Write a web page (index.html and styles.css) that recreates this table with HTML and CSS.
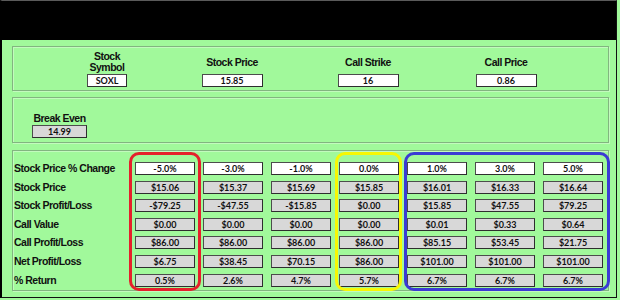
FILE: index.html
```html
<!DOCTYPE html>
<html>
<head>
<meta charset="utf-8">
<link rel="stylesheet" href="styles.css">
</head>
<body>
<div class="frame">
  <div class="header"></div>
  <div class="content">
    <section class="panel inputs">
      <div class="field"><div class="label">Stock<br>Symbol</div><div class="box white w40">SOXL</div></div>
      <div class="field"><div class="label">Stock Price</div><div class="box white w61">15.85</div></div>
      <div class="field"><div class="label">Call Strike</div><div class="box white w61">16</div></div>
      <div class="field"><div class="label">Call Price</div><div class="box white w61">0.86</div></div>
    </section>
    <section class="panel breakeven">
      <div class="field"><div class="label">Break Even</div><div class="box gray w55">14.99</div></div>
    </section>
    <section class="panel table">
      <div class="grid">
        <div class="rowlabel">Stock Price % Change</div>
        <div class="box white">-5.0%</div><div class="box white">-3.0%</div><div class="box white">-1.0%</div><div class="box white">0.0%</div><div class="box white">1.0%</div><div class="box white">3.0%</div><div class="box white">5.0%</div>
        <div class="rowlabel">Stock Price</div>
        <div class="box gray">$15.06</div><div class="box gray">$15.37</div><div class="box gray">$15.69</div><div class="box gray">$15.85</div><div class="box gray">$16.01</div><div class="box gray">$16.33</div><div class="box gray">$16.64</div>
        <div class="rowlabel">Stock Profit/Loss</div>
        <div class="box gray">-$79.25</div><div class="box gray">-$47.55</div><div class="box gray">-$15.85</div><div class="box gray">$0.00</div><div class="box gray">$15.85</div><div class="box gray">$47.55</div><div class="box gray">$79.25</div>
        <div class="rowlabel">Call Value</div>
        <div class="box gray">$0.00</div><div class="box gray">$0.00</div><div class="box gray">$0.00</div><div class="box gray">$0.00</div><div class="box gray">$0.01</div><div class="box gray">$0.33</div><div class="box gray">$0.64</div>
        <div class="rowlabel">Call Profit/Loss</div>
        <div class="box gray">$86.00</div><div class="box gray">$86.00</div><div class="box gray">$86.00</div><div class="box gray">$86.00</div><div class="box gray">$85.15</div><div class="box gray">$53.45</div><div class="box gray">$21.75</div>
        <div class="rowlabel">Net Profit/Loss</div>
        <div class="box gray">$6.75</div><div class="box gray">$38.45</div><div class="box gray">$70.15</div><div class="box gray">$86.00</div><div class="box gray">$101.00</div><div class="box gray">$101.00</div><div class="box gray">$101.00</div>
        <div class="rowlabel">% Return</div>
        <div class="box gray">0.5%</div><div class="box gray">2.6%</div><div class="box gray">4.7%</div><div class="box gray">5.7%</div><div class="box gray">6.7%</div><div class="box gray">6.7%</div><div class="box gray">6.7%</div>
      </div>
      <div class="hl hl-red"></div>
      <div class="hl hl-yellow"></div>
      <div class="hl hl-blue"></div>
    </section>
  </div>
</div>
</body>
</html>
```
FILE: styles.css
```css
html, body {
  margin: 0;
  padding: 0;
  background: #a1f99b;
}
body {
  width: 620px;
  height: 300px;
  overflow: hidden;
  font-family: "Liberation Sans", Arial, sans-serif;
  color: #111;
}
.frame {
  box-sizing: border-box;
  width: 617px;
  height: 298px;
  border-top: 1px solid #5a5a5a;
  border-left: 2px solid #000;
  border-right: 1px solid #111;
  border-bottom: 1px solid #111;
  background: #a1f99b;
}
.header {
  height: 39px;
  background: #000;
}
.content {
  padding: 6px 0 0 10px;
  display: flex;
  flex-direction: column;
}
.panel {
  box-sizing: border-box;
  width: 597px;
  border: 1px solid #82b580;
  box-shadow: 1px 1px 0 #c2fbbd, inset 1px 1px 0 #c2fbbd;
}
.label, .rowlabel {
  font-weight: bold;
  font-size: 10.5px;
  letter-spacing: -0.5px;
  color: #111;
}
.box {
  box-sizing: border-box;
  height: 13px;
  border: 1px solid #4c4c4c;
  border-right-color: #2e2e2e;
  border-bottom-color: #2e2e2e;
  font-family: Lato, "Liberation Sans", sans-serif;
  font-weight: bold;
  font-size: 9px;
  line-height: 11px;
  text-align: center;
  color: #111;
}
.white { background: #ffffff; }
.gray { background: #d8d8d8; }
.w40 { width: 40px; }
.w55 { width: 55px; }
.w61 { width: 61px; }

.inputs {
  height: 45px;
  display: grid;
  grid-template-columns: 110px 140px 132px 144px;
  padding: 4px 0 3px 39px;
}
.field {
  display: flex;
  flex-direction: column;
  align-items: center;
}
.inputs .label {
  height: 22px;
  line-height: 11px;
  display: flex;
  align-items: center;
  justify-content: center;
  text-align: center;
  margin-bottom: 1px;
}
.breakeven {
  margin-top: 6px;
  height: 46px;
  display: flex;
  align-items: flex-end;
  padding: 0 0 4px 19px;
}
.breakeven .label {
  line-height: 12px;
  margin-bottom: 1px;
}
.table {
  margin-top: 7px;
  height: 141px;
  position: relative;
  padding: 11px 0 0 1px;
}
.grid {
  display: grid;
  grid-template-columns: 113px repeat(7, 60px);
  grid-auto-rows: 13px;
  column-gap: 8px;
  row-gap: 5.6px;
}
.rowlabel {
  line-height: 13px;
  white-space: nowrap;
}
.hl {
  position: absolute;
  box-sizing: border-box;
  top: 1px;
  height: 139px;
  border: 3px solid;
  border-radius: 10px;
}
.hl-red { left: 116px; width: 72px; border-color: #e5202b; }
.hl-yellow { left: 322px; width: 67px; border-color: #f7f704; }
.hl-blue { left: 391px; width: 206px; border-color: #3b3bd4; }
```
